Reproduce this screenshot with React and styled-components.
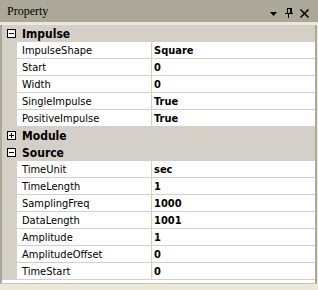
import React, { useState } from "react";
import styled, { createGlobalStyle } from "styled-components";

const GlobalStyle = createGlobalStyle`
  html, body { margin: 0; padding: 0; background: #ece9d8; }
  body { font-family: Tahoma, "DejaVu Sans Condensed", "Liberation Sans", sans-serif; }
`;

const Panel = styled.div`
  width: 318px;
  height: 290px;
  display: flex;
  flex-direction: column;
  background: #ece9d8;
  box-sizing: border-box;
`;

const TitleBar = styled.div`
  height: 22px;
  background: #aca899;
  display: flex;
  align-items: center;
  padding: 0 6px 0 7px;
  font-family: "Liberation Serif", "Times New Roman", serif;
  font-size: 12px;
  color: #000;
`;

const Title = styled.span`
  flex: 1;
  padding-top: 1px;
`;

const TitleButtons = styled.div`
  display: flex;
  align-items: center;
  gap: 0;
`;

const Gap = styled.div`
  height: 3px;
`;

const Grid = styled.div`
  margin-right: 1px;
  border-left: 2px solid #aca899;
  border-right: 2px solid #aca899;
  border-bottom: 1px solid #c8c4b8;
  background: #fff;
  padding-bottom: 3px;
`;

const CategoryRow = styled.div`
  height: 17px;
  background: #d4d0c8;
  display: flex;
  align-items: center;
  font-weight: bold;
  font-size: 12px;
  color: #000;
  cursor: default;
`;

const ExpandBox = styled.div`
  width: 9px;
  height: 9px;
  box-sizing: border-box;
  border: 1px solid #000;
  background: #fff;
  margin: 0 6px 0 5px;
  position: relative;
  &::before {
    content: "";
    position: absolute;
    left: 1px;
    top: 3px;
    width: 5px;
    height: 1px;
    background: #000;
  }
  &::after {
    content: "";
    position: absolute;
    left: 3px;
    top: 1px;
    width: 1px;
    height: 5px;
    background: #000;
    display: ${(p) => (p.$open ? "none" : "block")};
  }
`;

const PropRow = styled.div`
  height: 17px;
  display: grid;
  grid-template-columns: 15px 135px 1fr;
  font-size: 11px;
  color: #000;
`;

const Margin = styled.div`
  background: #d4d0c8;
`;

const NameCell = styled.div`
  border-right: 1px solid #d4d0c8;
  border-bottom: 1px solid #d4d0c8;
  padding-left: 5px;
  display: flex;
  align-items: center;
  white-space: nowrap;
  overflow: hidden;
`;

const ValueCell = styled.div`
  border-bottom: 1px solid #d4d0c8;
  padding-left: 2px;
  display: flex;
  align-items: center;
  font-weight: bold;
  white-space: nowrap;
  overflow: hidden;
`;

const categories = [
  {
    name: "Impulse",
    open: true,
    props: [
      ["ImpulseShape", "Square"],
      ["Start", "0"],
      ["Width", "0"],
      ["SingleImpulse", "True"],
      ["PositiveImpulse", "True"],
    ],
  },
  { name: "Module", open: false, props: [] },
  {
    name: "Source",
    open: true,
    props: [
      ["TimeUnit", "sec"],
      ["TimeLength", "1"],
      ["SamplingFreq", "1000"],
      ["DataLength", "1001"],
      ["Amplitude", "1"],
      ["AmplitudeOffset", "0"],
      ["TimeStart", "0"],
    ],
  },
];

const DropIcon = () => (
  <svg width="16" height="22" viewBox="0 0 16 22">
    <path d="M4 12h7l-3.5 4z" fill="#000" />
  </svg>
);

const PinIcon = () => (
  <svg width="16" height="22" viewBox="0 0 16 22" shapeRendering="crispEdges">
    <rect x="5" y="8" width="1" height="5" fill="#000" />
    <rect x="8" y="8" width="2" height="5" fill="#000" />
    <rect x="5" y="8" width="4" height="1" fill="#000" />
    <rect x="3" y="13" width="8" height="1" fill="#000" />
    <rect x="6" y="14" width="1" height="4" fill="#000" />
  </svg>
);

const CloseIcon = () => (
  <svg width="14" height="22" viewBox="0 0 14 22">
    <path d="M2.5 9.5l8 8M10.5 9.5l-8 8" stroke="#000" strokeWidth="1.6" fill="none" />
  </svg>
);

export default function App() {
  const [open, setOpen] = useState(() =>
    Object.fromEntries(categories.map((c) => [c.name, c.open]))
  );
  return (
    <>
      <GlobalStyle />
      <Panel>
        <TitleBar>
          <Title>Property</Title>
          <TitleButtons>
            <DropIcon />
            <PinIcon />
            <CloseIcon />
          </TitleButtons>
        </TitleBar>
        <Gap />
        <Grid>
          {categories.map((c) => (
            <React.Fragment key={c.name}>
              <CategoryRow onClick={() => setOpen((o) => ({ ...o, [c.name]: !o[c.name] }))}>
                <ExpandBox $open={open[c.name]} />
                {c.name}
              </CategoryRow>
              {open[c.name] &&
                c.props.map(([n, v]) => (
                  <PropRow key={n}>
                    <Margin />
                    <NameCell>{n}</NameCell>
                    <ValueCell>{v}</ValueCell>
                  </PropRow>
                ))}
            </React.Fragment>
          ))}
        </Grid>
      </Panel>
    </>
  );
}
